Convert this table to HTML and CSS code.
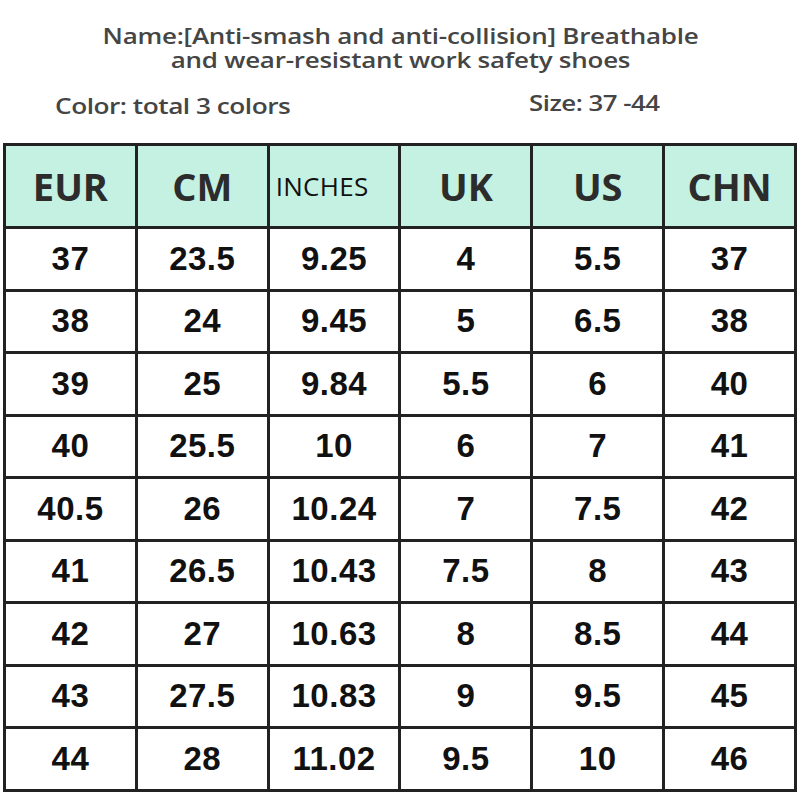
FILE: index.html
```html
<!DOCTYPE html>
<html>
<head>
<meta charset="utf-8">
<link rel="stylesheet" href="styles.css">
</head>
<body>
<div class="page">
  <div class="title-wrap">
    <h1 class="title">Name:[Anti-smash and anti-collision] Breathable<br>and wear-resistant work safety shoes</h1>
  </div>
  <div class="info">
    <span class="color">Color: total 3 colors</span>
    <span class="size">Size: 37 -44</span>
  </div>
  <table class="chart">
    <thead>
      <tr><th>EUR</th><th>CM</th><th class="small">INCHES</th><th>UK</th><th>US</th><th>CHN</th></tr>
    </thead>
    <tbody>
      <tr><td>37</td><td>23.5</td><td>9.25</td><td>4</td><td>5.5</td><td>37</td></tr>
      <tr><td>38</td><td>24</td><td>9.45</td><td>5</td><td>6.5</td><td>38</td></tr>
      <tr><td>39</td><td>25</td><td>9.84</td><td>5.5</td><td>6</td><td>40</td></tr>
      <tr><td>40</td><td>25.5</td><td>10</td><td>6</td><td>7</td><td>41</td></tr>
      <tr><td>40.5</td><td>26</td><td>10.24</td><td>7</td><td>7.5</td><td>42</td></tr>
      <tr><td>41</td><td>26.5</td><td>10.43</td><td>7.5</td><td>8</td><td>43</td></tr>
      <tr><td>42</td><td>27</td><td>10.63</td><td>8</td><td>8.5</td><td>44</td></tr>
      <tr><td>43</td><td>27.5</td><td>10.83</td><td>9</td><td>9.5</td><td>45</td></tr>
      <tr><td>44</td><td>28</td><td>11.02</td><td>9.5</td><td>10</td><td>46</td></tr>
    </tbody>
  </table>
</div>
</body>
</html>
```

FILE: styles.css
```css
html, body {
  margin: 0;
  padding: 0;
  background: #ffffff;
}

.page {
  width: 800px;
  height: 800px;
  box-sizing: border-box;
  padding: 23px 3px 0 3px;
}

.title-wrap {
  text-align: center;
}

.title {
  display: inline-block;
  margin: 0;
  font-family: "Open Sans", "DejaVu Sans", sans-serif;
  font-weight: 600;
  font-size: 22px;
  line-height: 24px;
  color: #454545;
  text-align: center;
  letter-spacing: -0.2px;
  transform: scaleX(1.18);
  transform-origin: center;
}

.info {
  display: flex;
  align-items: flex-start;
  padding: 17px 0 0 52px;
  height: 54px;
  font-family: "Open Sans", "DejaVu Sans", sans-serif;
  font-weight: 600;
  font-size: 21px;
  color: #454545;
  letter-spacing: -0.4px;
}

.color {
  display: inline-block;
  margin-top: 3px;
  transform: scaleX(1.25);
  transform-origin: left center;
}

.size {
  display: inline-block;
  margin-left: 286px;
  transform: scaleX(1.23);
  transform-origin: left center;
}

.chart {
  border-collapse: collapse;
  width: 794px;
  table-layout: fixed;
}

.chart th,
.chart td {
  border: 3px solid #222222;
  text-align: center;
  padding: 0;
}

.chart th {
  background: #c4f1e2;
  height: 80px;
  font-family: "Open Sans", "DejaVu Sans", sans-serif;
  font-weight: 700;
  font-size: 38px;
  color: #2c2c2c;
}

.chart th.small {
  font-weight: 400;
  font-size: 26px;
  color: #111111;
  text-align: left;
  padding-left: 6px;
  letter-spacing: 0.3px;
}

.chart td {
  height: 59.5px;
  font-family: "Liberation Sans", Arial, sans-serif;
  font-weight: 700;
  font-size: 33px;
  color: #111111;
  letter-spacing: 0.5px;
}
```
